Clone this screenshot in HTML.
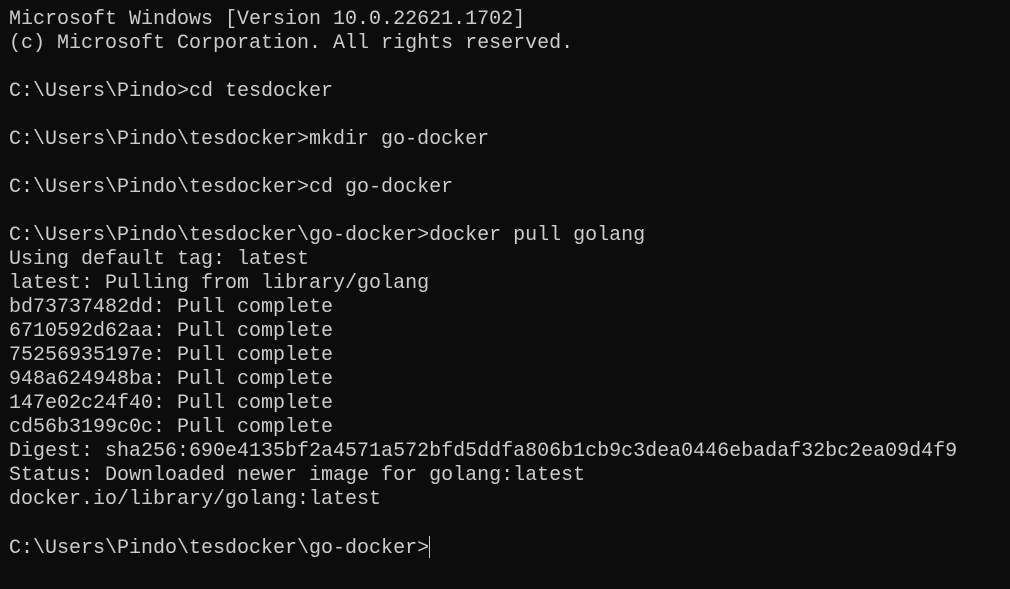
<!DOCTYPE html>
<html><head><style>
html,body{margin:0;padding:0;background:#0c0c0c;width:1010px;height:589px;overflow:hidden}
pre{margin:0;padding:8px 0 0 9px;font-family:"Liberation Mono",monospace;font-size:20px;line-height:24px;color:#cccccc}
.cur{display:inline-block;width:1px;height:22px;background:#cccccc;vertical-align:-5px}
</style></head><body><pre>Microsoft Windows [Version 10.0.22621.1702]
(c) Microsoft Corporation. All rights reserved.

C:\Users\Pindo>cd tesdocker

C:\Users\Pindo\tesdocker>mkdir go-docker

C:\Users\Pindo\tesdocker>cd go-docker

C:\Users\Pindo\tesdocker\go-docker>docker pull golang
Using default tag: latest
latest: Pulling from library/golang
bd73737482dd: Pull complete
6710592d62aa: Pull complete
75256935197e: Pull complete
948a624948ba: Pull complete
147e02c24f40: Pull complete
cd56b3199c0c: Pull complete
Digest: sha256:690e4135bf2a4571a572bfd5ddfa806b1cb9c3dea0446ebadaf32bc2ea09d4f9
Status: Downloaded newer image for golang:latest
docker.io/library/golang:latest

C:\Users\Pindo\tesdocker\go-docker&gt;<span class="cur"></span></pre></body></html>
